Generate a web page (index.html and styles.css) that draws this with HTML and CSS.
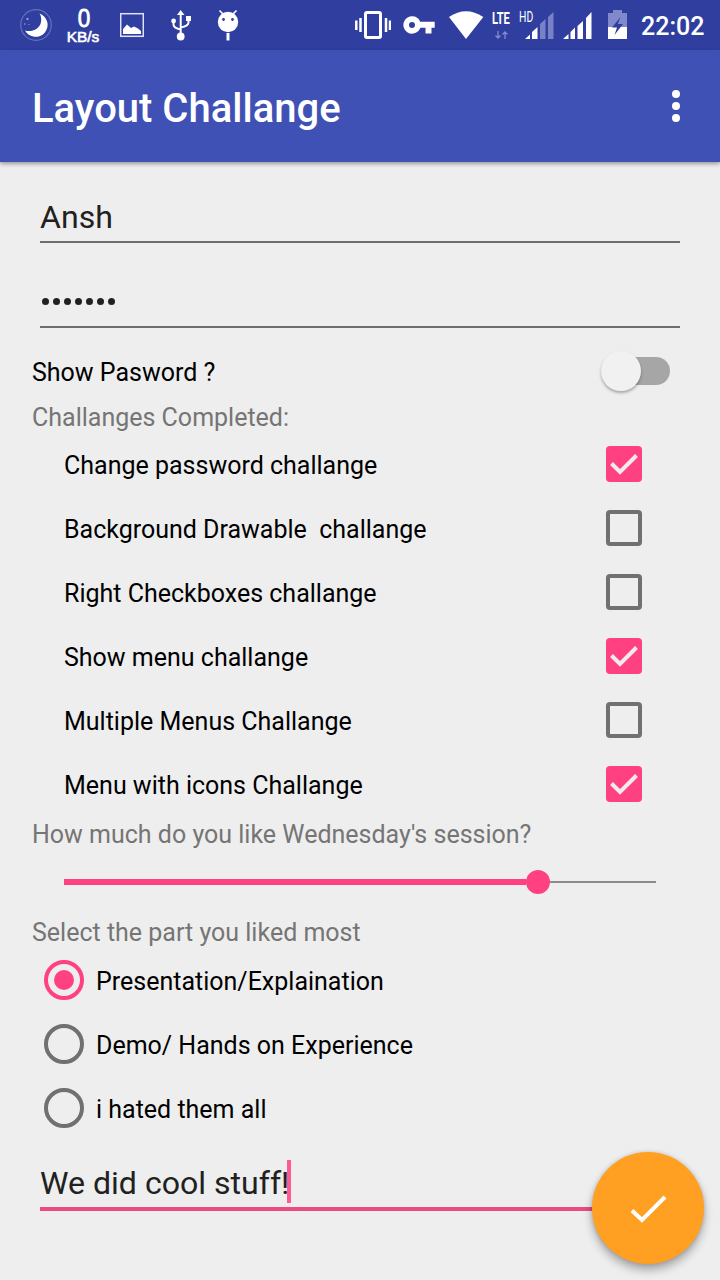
FILE: index.html
```html
<!DOCTYPE html>
<html lang="en">
<head>
<meta charset="utf-8">
<title>Layout Challange</title>
<link rel="stylesheet" href="styles.css">
</head>
<body>
<div class="screen">
  <div class="status">
    <svg class="moon" width="32" height="50" viewBox="20 0 32 50"><circle cx="36" cy="25" r="15.3" fill="none" stroke="#6570bd" stroke-width="1.2"/><path d="M39.5 13.5A12 12 0 1 1 25 30.5C31.500 32.500 40 29 41 22C41.500 18.500 41 15.500 39.500 13.500Z" fill="#fff"/><circle cx="27.500" cy="19" r="1.100" fill="#aab1e0"/><circle cx="24.800" cy="24" r=".7" fill="#aab1e0"/><circle cx="29" cy="24.500" r=".6" fill="#aab1e0"/></svg>
    <div class="speed"><span class="speed-value">0</span><span class="speed-unit">KB/s</span></div>
    <svg class="picture" width="24" height="50" viewBox="120 0 24 50"><rect x="120.700" y="13.700" width="22.600" height="22.600" fill="none" stroke="#dfe3fa" stroke-width="1.500"/><path d="M123 34V29L127 24.500L131 28L134 26.500L138 28.500L141 31V34Z" fill="#fff"/></svg>
    <svg class="usb" width="22" height="50" viewBox="171 0 22 50"><path d="M180.700 14V35M173.500 21V24.500Q173.500 28 180.700 29.500M188.500 18.500V22.500Q188.500 26 180.700 27.500" fill="none" stroke="#fff" stroke-width="2"/><path d="M180.700 10L184.500 15H177Z" fill="#fff"/><circle cx="180.700" cy="36.500" r="3.900" fill="#fff"/><circle cx="173.600" cy="21" r="2.400" fill="#fff"/><rect x="186" y="16" width="5" height="5" fill="#fff"/></svg>
    <svg class="bot" width="22" height="50" viewBox="217 0 22 50"><circle cx="228" cy="22" r="10.200" fill="#fff"/><path d="M223 14L219.500 10.500M233 14L236.500 10.500" stroke="#fff" stroke-width="1.600"/><path d="M228 33V40.500" stroke="#fff" stroke-width="3"/><circle cx="223.500" cy="19.500" r="1.400" fill="#303f9f"/><circle cx="232.500" cy="19.500" r="1.400" fill="#303f9f"/></svg>
    <span class="spacer"></span>
    <svg class="vibrate" width="36" height="50" viewBox="355 0 36 50"><rect x="365.500" y="12.500" width="15" height="25" rx="1.500" fill="none" stroke="#fff" stroke-width="3"/><path d="M360.500 18V32M356.300 20.500V30M386 18V32M390 20.500V30" stroke="#fff" stroke-width="2.500"/></svg>
    <svg class="key" width="32" height="50" viewBox="403 0 32 50"><path fill-rule="evenodd" d="M412 16.300A8.700 8.700 0 1 0 419.500 29.500L420.400 27.800H425.500V33.500H431.500V27.800H434.700V21.800H420.200A8.700 8.700 0 0 0 412 16.300ZM412 22A3 3 0 1 1 412 28A3 3 0 1 1 412 22Z" fill="#fff"/></svg>
    <svg class="wifi" width="35" height="50" viewBox="449 0 35 50"><path d="M449 17Q466 5.500 483.300 17L466 39Z" fill="#fff"/></svg>
    <div class="network"><span class="lte">LTE</span><svg width="18" height="10" viewBox="492 30 18 10"><path d="M498 31V38M495.500 35.500L498 38L500.500 35.500M505 39V32M502.500 34.500L505 32L507.500 34.500" fill="none" stroke="#7f89cd" stroke-width="1.300"/></svg></div>
    <div class="cell"><span class="hd">HD</span><svg width="29" height="50" viewBox="525 0 29 50"><path d="M525 39L530 34.500V39ZM532 39V32L537.500 27V39Z" fill="#fff"/><path d="M540 39V24L545.500 19V39ZM548 39V17L553.500 12V39Z" fill="#7782c6"/></svg></div>
    <svg class="signal" width="29" height="50" viewBox="563 0 29 50"><path d="M563 39L568.500 34V39ZM570.500 39V32L575 27.500V39ZM577.500 39V26L583 21V39ZM586 39V18L591.500 12V39Z" fill="#fff"/></svg>
    <svg class="battery" width="20" height="50" viewBox="608 0 20 50"><path d="M608 27V13H613V10H622V13H627V27Z" fill="#8089cb"/><path d="M608 27H627V39H608Z" fill="#fff"/><path d="M620.500 17L612 27.500H617L614.500 35L623 24H617.800Z" fill="#303f9f"/></svg>
    <span class="clock">22:02</span>
  </div>
  <header class="appbar"><h1 class="title">Layout Challange</h1><div class="more"><i></i><i></i><i></i></div></header>
  <main class="form">
    <div class="field name">Ansh</div>
    <div class="field password"><i></i><i></i><i></i><i></i><i></i><i></i><i></i></div>
    <div class="row switch-row"><span>Show Pasword ?</span><div class="switch"><div class="thumb"></div></div></div>
    <div class="caption completed">Challanges Completed:</div>
    <div class="checks">
      <div class="row"><span>Change password challange</span><div class="box on"><svg width="36" height="36" viewBox="0 0 36 36"><path d="M5.500 17.500L14 26L30.500 9.500"/></svg></div></div>
      <div class="row"><span>Background Drawable&nbsp; challange</span><div class="box"></div></div>
      <div class="row"><span>Right Checkboxes challange</span><div class="box"></div></div>
      <div class="row"><span>Show menu challange</span><div class="box on"><svg width="36" height="36" viewBox="0 0 36 36"><path d="M5.500 17.500L14 26L30.500 9.500"/></svg></div></div>
      <div class="row"><span>Multiple Menus Challange</span><div class="box"></div></div>
      <div class="row"><span>Menu with icons Challange</span><div class="box on"><svg width="36" height="36" viewBox="0 0 36 36"><path d="M5.500 17.500L14 26L30.500 9.500"/></svg></div></div>
    </div>
    <div class="caption">How much do you like Wednesday's session?</div>
    <div class="slider"><div class="filled"></div><div class="knob"></div><div class="rest"></div></div>
    <div class="caption">Select the part you liked most</div>
    <div class="radios">
      <div class="option"><div class="radio on"></div><span>Presentation/Explaination</span></div>
      <div class="option"><div class="radio"></div><span>Demo/ Hands on Experience</span></div>
      <div class="option"><div class="radio"></div><span>i hated them all</span></div>
    </div>
    <div class="field comment"><span>We did cool stuff!</span><div class="caret"></div></div>
  </main>
  <div class="fab"><svg width="112" height="112" viewBox="0 0 112 112"><path d="M40 58.500L50 68L73 45"/></svg></div>
</div>
</body>
</html>
```
FILE: styles.css
```css
* { box-sizing: border-box; }
body { margin: 0; background: #eee; font-family: Roboto, sans-serif; }
svg { display: block; flex: none; }
.screen { position: relative; width: 720px; height: 1280px; overflow: hidden; background: #eee; }
.status { display: flex; height: 50px; padding: 0 15px 0 20px; background: #303f9f; color: #fff; }
.speed { display: flex; flex-direction: column; align-items: center; width: 36px; margin-left: 13px; padding-top: 7px; font-family: "Liberation Sans", sans-serif; }
.speed-value { height: 22px; margin-left: 2px; font-size: 25px; line-height: 23px; -webkit-text-stroke: .8px #fff; transform: scaleX(.9); }
.speed-unit { font-size: 15.5px; line-height: 16px; -webkit-text-stroke: .6px #fff; }
.picture { margin-left: 19px; }
.usb { margin-left: 27px; }
.bot { margin-left: 24px; }
.spacer { flex: 1; }
.key { margin-left: 12px; }
.wifi { margin-left: 14px; }
.network { width: 18px; margin-left: 8px; }
.lte { display: block; width: 26px; height: 30px; padding-top: 9px; font-size: 17px; font-weight: 700; line-height: 18px; transform: scaleX(.65); transform-origin: left; }
.cell { position: relative; margin-left: 15px; }
.hd { position: absolute; left: -6px; top: 10px; font-size: 14px; line-height: 14px; transform: scaleX(.74); transform-origin: left; }
.signal { margin-left: 9px; }
.battery { margin-left: 16px; }
.clock { width: 64px; margin-left: 13px; font-size: 25px; font-weight: 500; line-height: 54px; white-space: nowrap; }
.appbar { position: relative; display: flex; justify-content: space-between; height: 112px; padding: 0 40px 0 32px; background: #3f51b5; color: #fff; box-shadow: 0 2px 4px rgba(0,0,0,.35); }
.title { margin: 0; font-size: 40px; font-weight: 500; line-height: 118px; }
.more { display: flex; flex-direction: column; gap: 4px; padding-top: 40px; }
.more i { width: 8px; height: 8px; border-radius: 50%; background: #fff; }
.form { padding: 22px 40px 0 32px; font-size: 25px; color: #000; }
.field { display: flex; margin-left: 8px; border-bottom: 2px solid #6d6d6d; font-size: 32.1px; color: #212121; }
.name { height: 59px; line-height: 66px; }
.password { height: 85px; gap: 4px; padding: 55px 0 0 2px; }
.password i { width: 7px; height: 7px; border-radius: 50%; background: #212121; }
.row { display: flex; align-items: center; justify-content: space-between; height: 64px; }
.row span, .option span { padding-top: 3px; line-height: 32px; }
.switch-row { height: 74px; padding-top: 12px; }
.switch { width: 62px; height: 28px; margin-right: 10px; border-radius: 14px; background: #a6a6a6; }
.thumb { width: 40px; height: 40px; margin: -6px 0 0 -7px; border-radius: 50%; background: #f1f1f1; box-shadow: 0 2px 3px rgba(0,0,0,.3); }
.caption { height: 34px; line-height: 38px; color: #757575; }
.completed { height: 30px; line-height: 31px; }
.checks { padding: 0 38px 0 32px; }
.box { width: 36px; height: 36px; border: 4px solid #707070; border-radius: 4px; }
.box.on { border: 0; background: #ff4081; }
.box path { fill: none; stroke: #f3eaee; stroke-width: 4; }
.slider { display: flex; align-items: center; height: 64px; padding: 0 24px 0 32px; }
.filled { width: 462px; height: 6px; background: #ff4081; }
.knob { width: 24px; height: 24px; border-radius: 50%; background: #ff4081; }
.rest { flex: 1; height: 2px; background: #8b8b8b; }
.radios { padding-left: 12px; }
.option { display: flex; align-items: center; gap: 12px; height: 64px; }
.radio { width: 40px; height: 40px; border: 4px solid #707070; border-radius: 50%; }
.radio.on { padding: 6px; border-color: #ff4081; background: #ff4081 content-box; }
.comment { height: 71px; border-bottom: 4px solid #ec4a82; line-height: 87px; white-space: nowrap; }
.caret { width: 4px; height: 43px; margin: 20px 0 0 -2px; background: #ff5a91; }
.fab { position: absolute; left: 592px; top: 1152px; width: 112px; height: 112px; border-radius: 50%; background: #ffa023; box-shadow: 0 6px 10px rgba(0,0,0,.3), 0 0 4px rgba(0,0,0,.14); }
.fab path { fill: none; stroke: #fff; stroke-width: 4; }
```
